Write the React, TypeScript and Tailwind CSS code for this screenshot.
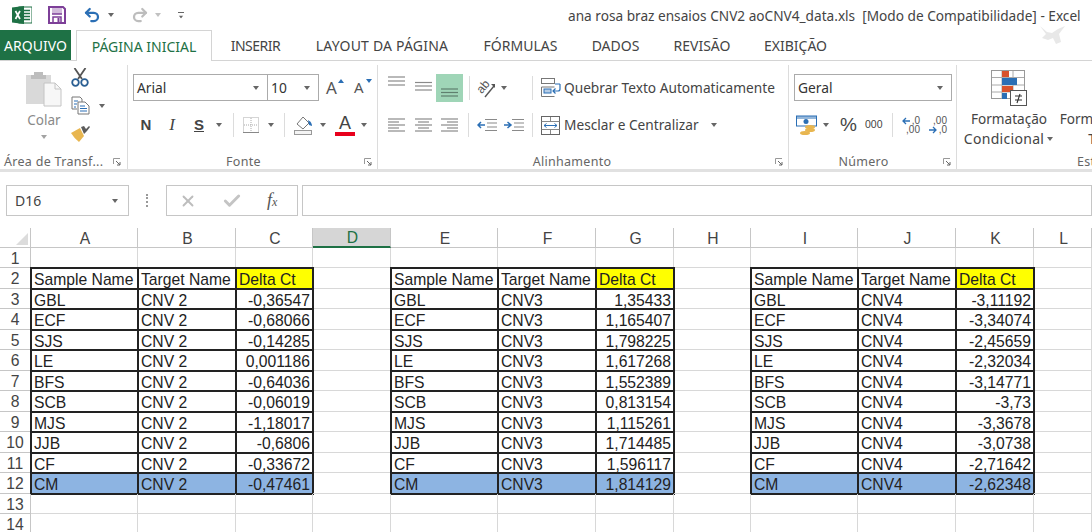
import { Check, Redo2, Undo2, X } from "lucide-react";
import React from "react";

const uiFont = "font-['Noto_Sans',sans-serif]";
const cellFont = "font-['Liberation_Sans',Arial,sans-serif]";

const Caret = ({ className = "" }: { className?: string }) => (
  <svg width="8" height="4" viewBox="0 0 8 4" className={className}>
    <path d="M1 0h6L4 4z" fill="#666" />
  </svg>
);

const Launcher = ({ className = "" }: { className?: string }) => (
  <svg width="8" height="8" viewBox="0 0 8 8" className={className}>
    <path d="M.5 6V.5H7" fill="none" stroke="#999" />
    <path d="M3 3l4 4M7 4v3H4" fill="none" stroke="#666" />
  </svg>
);

const Sep = ({ className = "" }: { className?: string }) => (
  <div className={`w-px h-6 bg-[#dcdcdc] shrink-0 ${className}`} />
);

const ExcelIcon = () => (
  <svg width="20" height="18" viewBox="0 0 20 18">
    <rect x="7" y="1" width="13" height="16" fill="#fff" stroke="#1e7145" />
    <path d="M12 4.500h6M12 7.500h6M12 10.500h6M12 13.500h6" stroke="#1e7145" strokeWidth="1.600" />
    <path d="M0 1.500 12 0v18L0 16.500z" fill="#1e7145" />
    <path d="M3.500 5l4.500 8M8 5l-4.500 8" stroke="#fff" strokeWidth="1.700" />
  </svg>
);

const SaveIcon = () => (
  <svg width="18" height="18" viewBox="0 0 18 18">
    <path d="M1 1h14l2 2v14H1z" fill="none" stroke="#7d3f98" strokeWidth="2" />
    <rect x="4" y="2" width="10" height="6" fill="#7d3f98" opacity=".35" />
    <path d="M4 8h10" stroke="#7d3f98" strokeWidth="1.500" />
    <path d="M5 17v-6h8v6" fill="none" stroke="#7d3f98" strokeWidth="1.500" />
    <rect x="9.500" y="12" width="2" height="4" fill="#7d3f98" />
  </svg>
);

const PasteIcon = () => (
  <svg width="36" height="37" viewBox="0 0 36 37">
    <rect x="0" y="5" width="25" height="29" fill="#d9d9d9" />
    <path d="M8 5V2h9v3h3v4H5V5z" fill="#bdbdbd" />
    <path d="M18 13h11l6 6v17H18z" fill="#f7f7f7" stroke="#c4c4c4" />
    <path d="M29 13v6h6" fill="none" stroke="#c4c4c4" />
  </svg>
);

const ScissorsIcon = () => (
  <svg width="18" height="19" viewBox="0 0 18 19">
    <path d="M3.500 0l7.500 11M14.500 0 7 11" stroke="#555" strokeWidth="1.800" fill="none" />
    <circle cx="4.500" cy="14.500" r="3.300" fill="none" stroke="#2b5f93" strokeWidth="1.800" />
    <circle cx="13.500" cy="14.500" r="3.300" fill="none" stroke="#2b5f93" strokeWidth="1.800" />
  </svg>
);

const CopyIcon = () => (
  <svg width="20" height="19" viewBox="0 0 20 19">
    <path d="M1 1h8l2 2v4M1 1v12h5" fill="none" stroke="#777" />
    <path d="M7 6h7l4 4v8H7z" fill="#fff" stroke="#777" />
    <path d="M3 5h4M3 8h3M3 11h2" stroke="#2b6fb5" />
    <path d="M9 10h5M9 12.500h7M9 15h7" stroke="#2b6fb5" />
  </svg>
);

const BrushIcon = () => (
  <svg width="20" height="17" viewBox="0 0 20 17">
    <path d="M0 8 9 3l4 8-5 6q-5-4-8-9z" fill="#e8b650" />
    <path d="M10 2l3-1 2 3 3-3 1 1-3 4-3 3z" fill="#5c5c5c" />
  </svg>
);

const BorderIcon = () => (
  <svg width="16" height="16" viewBox="0 0 16 16">
    <rect x=".5" y=".5" width="15" height="15" fill="none" stroke="#aaa" strokeDasharray="1 1" />
    <path d="M8 1v14M1 8h14" stroke="#aaa" strokeDasharray="1 1" />
    <path d="M0 15.500h16" stroke="#888" />
  </svg>
);

const FillIcon = () => (
  <svg width="19" height="20" viewBox="0 0 19 20">
    <path d="M3 9l6-7 6 6-6 6z" fill="#fff" stroke="#777" />
    <path d="M14 5q4 2 4 6l-3-1z" fill="#2b6fb5" />
    <rect x=".5" y="15.500" width="17" height="4" fill="#f4f4f4" stroke="#999" />
  </svg>
);

const Lines = ({ ys, dark = false }: { ys: number[]; dark?: boolean }) => (
  <svg width="17" height="27" viewBox="0 0 17 27" className="shrink-0">
    {ys.map((y, i) => (
      <path key={i} d={`M0 ${y}H17`} stroke={dark ? "#5f7f6e" : "#8a8a8a"} strokeWidth="1.200" />
    ))}
  </svg>
);

const AlignLines = ({ rows }: { rows: number[][] }) => (
  <svg width="17" height="14" viewBox="0 0 17 14" className="shrink-0">
    {rows.map((r, i) => (
      <path key={i} d={`M${r[0]} ${i * 3 + 1}H${r[1]}`} stroke="#8a8a8a" strokeWidth="1.200" />
    ))}
  </svg>
);

const OrientIcon = () => (
  <svg width="20" height="20" viewBox="0 0 20 20" className="overflow-visible">
    <text x="0" y="12" fontSize="12" fill="#555" transform="rotate(-50 7 9)" fontFamily="Liberation Sans">ab</text>
    <path d="M8 19 17 8" stroke="#555" strokeWidth="1.400" />
    <path d="M14 6h4v4z" fill="#555" />
  </svg>
);

const IndentIcon = ({ flip = false }: { flip?: boolean }) => (
  <svg width="20" height="14" viewBox="0 0 20 14">
    <path d="M8 1.500h12M10 5h10M10 9h10M8 12.500h12" stroke="#8a8a8a" strokeWidth="1.200" />
    {flip ? <path d="M0 7h6M3.500 4 7 7l-3.500 3" fill="none" stroke="#2b6fb5" strokeWidth="1.500" /> : <path d="M8 7H1M4 4 1 7l3 3" fill="none" stroke="#2b6fb5" strokeWidth="1.500" />}
  </svg>
);

const WrapIcon = () => (
  <svg width="20" height="19" viewBox="0 0 20 19">
    <rect x=".5" y=".5" width="13" height="5" fill="#fff" stroke="#777" />
    <path d="M.5 9h13M.5 18.500h13M.5 9v9.500" fill="none" stroke="#777" />
    <rect x="3" y="11" width="7" height="4" fill="#b6cde6" stroke="#2b6fb5" />
    <path d="M14 6h5M19 6v5q0 2-2 2h-5M14.500 10.500 12 13l2.500 2.500" fill="none" stroke="#2b6fb5" strokeWidth="1.200" />
  </svg>
);

const MergeIcon = () => (
  <svg width="19" height="19" viewBox="0 0 19 19">
    <rect x=".5" y=".5" width="18" height="18" fill="#fff" stroke="#666" />
    <path d="M.5 5.500h18M.5 13.500h18M9.500 1v4.500M9.500 13.500V18" stroke="#888" />
    <path d="M3 9.500h13M5.500 7.500l-2.500 2 2.500 2M13.500 7.500l2.500 2-2.500 2" fill="none" stroke="#2b6fb5" />
  </svg>
);

const AccountIcon = () => (
  <svg width="21" height="21" viewBox="0 0 21 21">
    <rect x=".5" y="1" width="20" height="10" fill="#fff" stroke="#2b6fb5" />
    <path d="M.5 1h20v3H.5z" fill="#2b6fb5" opacity=".5" />
    <circle cx="10" cy="6.500" r="2.500" fill="#2b6fb5" />
    <ellipse cx="14" cy="12" rx="5" ry="2" fill="#e8b650" />
    <ellipse cx="14" cy="15" rx="5" ry="2" fill="#e8b650" />
    <ellipse cx="9" cy="18" rx="5" ry="2" fill="#e8b650" />
  </svg>
);

const CondFormatIcon = () => (
  <svg width="36" height="36" viewBox="0 0 36 36">
    <rect x=".5" y=".5" width="33" height="28" fill="#fff" stroke="#999" />
    <path d="M11 1v28M22 1v28M1 7.500h32M1 15h32M1 22h32" stroke="#aaa" />
    <rect x="11" y="1" width="7" height="6" fill="#d9532c" />
    <rect x="11" y="8" width="15" height="7" fill="#2b6fb5" />
    <rect x="11" y="16" width="11" height="6" fill="#d9532c" />
    <rect x="11" y="23" width="5" height="6" fill="#2b6fb5" />
    <rect x="19.500" y="20.500" width="16" height="15" fill="#fff" stroke="#555" />
    <path d="M24 26h7M24 30h7M26 33l3-9" stroke="#333" strokeWidth="1.100" />
  </svg>
);

const DecimalIcon = ({ more = false }: { more?: boolean }) => (
  <div className={`relative w-[18px] h-[17px] shrink-0 text-[10px] leading-[8px] text-[#555] ${cellFont}`}>
    <span className="block text-right">{more ? ",0" : ",00"}</span>
    <span className="block text-right mt-px">{more ? ",00" : ",0"}</span>
    <svg width="8" height="8" viewBox="0 0 8 8" className={`absolute left-0 ${more ? "top-0" : "top-[9px]"}`}>
      <path d={more ? "M8 4H1M4 1 1 4l3 3" : "M0 4h7M4 1l3 3-3 3"} fill="none" stroke="#2b6fb5" strokeWidth="1.300" />
    </svg>
  </div>
);

const Group = ({ width, label, labelClass = "justify-center", launcher, children }: { width: string; label: string; labelClass?: string; launcher?: React.ReactNode; children: React.ReactNode }) => (
  <section className={`${width} h-full shrink-0 flex flex-col overflow-hidden relative`}>
    <div className="flex-1 min-h-0">{children}</div>
    <div className={`h-[14px] flex items-center text-[12.500px] tracking-[0.3px] text-[#666] ${labelClass}`}>
      <span>{label}</span>
      {launcher}
    </div>
  </section>
);

const VRule = () => <div className="w-px h-[104px] mt-[4px] bg-[#dcdcdc] shrink-0" />;

const TitleBar = () => (
  <div className="h-[30px] flex items-center relative">
    <div className="ml-[12px]"><ExcelIcon /></div>
    <div className="ml-[16px]"><SaveIcon /></div>
    <Undo2 size={18} strokeWidth={3} className="ml-[17px] text-[#2b6fb5]" />
    <Caret className="ml-[6px]" />
    <Redo2 size={18} strokeWidth={3} className="ml-[16px] text-[#bdbdbd]" />
    <Caret className="ml-[5px] opacity-40" />
    <div className="ml-[15px] flex flex-col items-center gap-[2px]">
      <div className="w-[6px] h-px bg-[#666]" />
      <Caret className="scale-75" />
    </div>
    <div className="absolute left-[568px] top-[7px] text-[13.650px] leading-[18px] text-[#444] whitespace-nowrap">
      ana rosa braz ensaios CNV2 aoCNV4_data.xls&nbsp; [Modo de Compatibilidade] - Excel
    </div>
    <svg width="28" height="22" viewBox="0 0 28 22" className="absolute left-[1039px] top-[24px]">
      <path d="M1 2l7 6 5 1 6-4 7-3-6 8 2 8-5 2-3-6-5 2-6-2 4-4z" fill="#e8e8e8" />
    </svg>
  </div>
);

const tabs = [
  { name: "INSERIR", cls: "w-[49px] tracking-[-0.5px]" },
  { name: "LAYOUT DA PÁGINA", cls: "w-[132px] ml-px tracking-[0.2px]" },
  { name: "FÓRMULAS", cls: "w-[73px] ml-px" },
  { name: "DADOS", cls: "w-[47px]" },
  { name: "REVISÃO", cls: "w-[56px]" },
  { name: "EXIBIÇÃO", cls: "w-[61px]" },
];

const Tabs = () => (
  <div className="h-[31px] flex items-stretch text-[14px] border-b border-[#d4d4d4]">
    <div className="w-[71px] h-[30px] bg-[#1e7145] text-white flex items-center justify-center">ARQUIVO</div>
    <div className="ml-[5px] w-[136px] h-[31px] bg-white border border-b-0 border-[#d4d4d4] text-[#1e7145] flex items-center justify-center">PÁGINA INICIAL</div>
    <div className="ml-[19px] flex items-center gap-[35px] text-[#444] h-[30px] whitespace-nowrap">
      {tabs.map((t) => (
        <span key={t.name} className={`${t.cls} flex justify-center`}>{t.name}</span>
      ))}
    </div>
  </div>
);

const SelectBox = ({ width, text, borderLeft = true }: { width: string; text: string; borderLeft?: boolean }) => (
  <div className={`${width} h-[27px] bg-white border border-[#ababab] ${borderLeft ? "" : "border-l-0"} flex items-center justify-between pl-[3px] pr-[7px] text-[13.800px] text-[#333]`}>
    <span className="pt-[2px]">{text}</span>
    <Caret />
  </div>
);

const Clipboard = () => (
  <Group width="w-[127px]" label="Área de Transf..." labelClass="pl-[4px]" launcher={<Launcher className="ml-[10px]" />}>
    <div className="flex h-full">
      <div className="ml-[26px] mt-[9px] flex flex-col items-center w-[36px]">
        <PasteIcon />
        <span className="mt-[3px] text-[13.500px] leading-[20px] text-[#8a8a8a]">Colar</span>
        <Caret className="mt-[5px] opacity-60" />
      </div>
      <div className="ml-[9px] mt-[7px] flex flex-col">
        <ScissorsIcon />
        <div className="mt-[9px] flex items-center">
          <CopyIcon />
          <Caret className="ml-[7px]" />
        </div>
        <div className="mt-[10px]"><BrushIcon /></div>
      </div>
    </div>
  </Group>
);

const FontGroup = () => (
  <Group width="w-[249px]" label="Fonte" labelClass="justify-center pr-[18px]" launcher={<Launcher className="absolute right-[5px]" />}>
    <div className="mt-[13px] ml-[5px] flex items-center">
      <SelectBox width="w-[135px]" text="Arial" />
      <SelectBox width="w-[51px]" text="10" borderLeft={false} />
      <span className="ml-[7px] w-[19px] text-[17px] leading-[27px] text-[#555] relative">
        A
        <svg width="6" height="4" viewBox="0 0 6 4" className="absolute right-[1px] top-[5px]"><path d="M3 0l3 4H0z" fill="#2b6fb5" /></svg>
      </span>
      <span className="ml-[9px] w-[19px] text-[15px] leading-[27px] text-[#555] relative">
        A
        <svg width="6" height="4" viewBox="0 0 6 4" className="absolute right-[1px] top-[5px]"><path d="M0 0h6L3 4z" fill="#2b6fb5" /></svg>
      </span>
    </div>
    <div className="mt-[12px] flex items-center h-6 text-[#444]">
      <span className={`ml-[6px] w-[24px] text-center font-bold text-[15px] ${cellFont}`}>N</span>
      <span className="ml-px w-[26px] text-center italic text-[17px] font-['Liberation_Serif',serif]">I</span>
      <span className={`ml-px w-[26px] text-center font-bold underline text-[15px] ${cellFont}`}>S</span>
      <Caret className="ml-[3px] mr-[3px]" />
      <Sep className="ml-[7px]" />
      <div className="ml-[9px]"><BorderIcon /></div>
      <Caret className="ml-[8px]" />
      <Sep className="ml-[9px]" />
      <div className="ml-[9px]"><FillIcon /></div>
      <Caret className="ml-[6px]" />
      <div className={`ml-[8px] w-[20px] flex flex-col items-center text-[18px] leading-[17px] text-[#444] ${cellFont}`}>
        A
        <div className="w-[20px] h-[4px] bg-[#e8001c]" />
      </div>
      <Caret className="ml-[5px]" />
    </div>
  </Group>
);

const AlignGroup = () => (
  <Group width="w-[410px]" label="Alinhamento" labelClass="justify-center pr-[22px]" launcher={<Launcher className="absolute right-[5px]" />}>
    <div className="mt-[13px] flex items-center h-[27px]">
      <div className="ml-[10px]"><Lines ys={[3, 7, 11]} /></div>
      <div className="ml-[10px]"><Lines ys={[8.500, 12, 16]} /></div>
      <div className="ml-[4px] w-[27px] h-[28px] bg-[#9fd5b7] flex justify-center">
        <Lines ys={[15, 18.500, 22]} dark />
      </div>
      <Sep className="ml-[6px]" />
      <div className="ml-[7px]"><OrientIcon /></div>
      <Caret className="ml-[3px]" />
      <Sep className="ml-[24px]" />
      <div className="ml-[8px]"><WrapIcon /></div>
      <span className="ml-[3px] pt-[2px] text-[13.700px] text-[#444] whitespace-nowrap">Quebrar Texto Automaticamente</span>
    </div>
    <div className="mt-[12px] flex items-center h-6">
      <div className="ml-[10px]"><AlignLines rows={[[0, 17], [0, 11], [0, 17], [0, 11], [0, 17]]} /></div>
      <div className="ml-[10px]"><AlignLines rows={[[0, 17], [3, 14], [0, 17], [3, 14], [0, 17]]} /></div>
      <div className="ml-[9px]"><AlignLines rows={[[0, 17], [6, 17], [0, 17], [6, 17], [0, 17]]} /></div>
      <Sep className="ml-[10px]" />
      <div className="ml-[8px]"><IndentIcon /></div>
      <div className="ml-[7px]"><IndentIcon flip /></div>
      <Sep className="ml-[8px]" />
      <div className="ml-[8px]"><MergeIcon /></div>
      <span className="ml-[4px] text-[13.700px] text-[#444] whitespace-nowrap">Mesclar e Centralizar</span>
      <Caret className="ml-[11px]" />
    </div>
  </Group>
);

const NumberGroup = () => (
  <Group width="w-[167px]" label="Número" labelClass="justify-center pr-[18px]" launcher={<Launcher className="absolute right-[5px]" />}>
    <div className="mt-[13px] ml-[5px]"><SelectBox width="w-[158px]" text="Geral" /></div>
    <div className="mt-[12px] flex items-center h-6 text-[#444]">
      <div className="ml-[7px]"><AccountIcon /></div>
      <Caret className="ml-[5px]" />
      <span className={`ml-[10px] w-[16px] text-[19px] leading-6 ${cellFont}`}>%</span>
      <span className={`ml-[9px] w-[18px] text-[10.500px] ${cellFont}`}>000</span>
      <Sep className="ml-[9px]" />
      <div className="ml-[9px]"><DecimalIcon more /></div>
      <div className="ml-[9px]"><DecimalIcon /></div>
    </div>
  </Group>
);

const StyleGroup = () => (
  <Group width="flex-1" label="Estilo" labelClass="pl-[120px]">
    <div className="flex text-[13.600px] leading-[20px] text-[#444] whitespace-nowrap text-center">
      <div className="ml-[2px] w-[100px] shrink-0 flex flex-col items-center mt-[9px]">
        <CondFormatIcon />
        <span className="mt-[3px]">Formatação</span>
        <span className="flex items-center gap-[2px] text-[14px] tracking-[0.3px]">Condicional <Caret /></span>
      </div>
      <div className="w-[100px] shrink-0 flex flex-col items-center mt-[48px]">
        <span>Formatar como</span>
        <span>Tabela</span>
      </div>
    </div>
  </Group>
);

const Ribbon = () => (
  <div className={`h-[111px] flex border-b-[3px] border-[#e1e1e1] ${uiFont} overflow-hidden`}>
    <Clipboard />
    <VRule />
    <FontGroup />
    <VRule />
    <AlignGroup />
    <VRule />
    <NumberGroup />
    <VRule />
    <StyleGroup />
  </div>
);

const FormulaBar = () => (
  <div className={`h-[56px] pt-[13px] flex items-start ${uiFont}`}>
    <div className="ml-[6px] w-[123px] h-[31px] border border-[#c6c6c6] flex items-center justify-between pl-[8px] pr-[9px] text-[14px] text-[#444]">
      <span>D16</span>
      <Caret />
    </div>
    <div className="ml-[17px] w-[2px] h-[13px] mt-[9px] border-l-2 border-dotted border-[#999]" />
    <div className="ml-[18px] w-[132px] h-[31px] border border-[#c6c6c6] flex items-center">
      <X size={18} strokeWidth={2.500} className="ml-[12px] text-[#bdbdbd]" />
      <Check size={20} strokeWidth={3.500} className="ml-[25px] text-[#c4c4c4]" />
      <span className="ml-[25px] italic text-[18px] text-[#555] font-['Liberation_Serif',serif]">
        f<span className="text-[12px]">x</span>
      </span>
    </div>
    <div className="ml-[4px] flex-1 h-[31px] border border-[#c6c6c6]" />
  </div>
);

const columns = ["A", "B", "C", "D", "E", "F", "G", "H", "I", "J", "K", "L"];

const tables: Record<number, { target: string; values: string[] }> = {
  1: { target: "CNV 2", values: ["-0,36547", "-0,68066", "-0,14285", "0,001186", "-0,64036", "-0,06019", "-1,18017", "-0,6806", "-0,33672", "-0,47461"] },
  5: { target: "CNV3", values: ["1,35433", "1,165407", "1,798225", "1,617268", "1,552389", "0,813154", "1,115261", "1,714485", "1,596117", "1,814129"] },
  9: { target: "CNV4", values: ["-3,11192", "-3,34074", "-2,45659", "-2,32034", "-3,14771", "-3,73", "-3,3678", "-3,0738", "-2,71642", "-2,62348"] },
};

const samples = ["GBL", "ECF", "SJS", "LE", "BFS", "SCB", "MJS", "JJB", "CF", "CM"];

const Cell = ({ row, col }: { row: number; col: number }) => {
  const base = col >= 9 ? 9 : col >= 5 ? 5 : 1;
  const offset = col - base;
  const inTable = offset <= 2 && row >= 2 && row <= 12;
  if (!inTable) return <div className="border-r border-b border-[#d8d8d8]" />;

  const t = tables[base];
  let text = "";
  if (row === 2) text = ["Sample Name", "Target Name", "Delta Ct"][offset];
  else text = offset === 0 ? samples[row - 3] : offset === 1 ? t.target : t.values[row - 3];

  const numeric = offset === 2 && row > 2;
  const bg = row === 12 ? "bg-[#8db4e2]" : row === 2 && offset === 2 ? "bg-[#ffff00]" : "bg-white";
  return (
    <div className={`${bg} outline-2 -outline-offset-1 outline-[#222] flex items-center whitespace-nowrap px-[3px] pt-[2px] leading-[19px] ${numeric ? "justify-end" : ""}`}>
      {text}
    </div>
  );
};

const Sheet = () => {
  const rows = Array.from({ length: 14 }, (_, i) => i + 1);
  return (
    <div className={`grid grid-cols-[31px_107px_98px_77px_78px_107px_98px_78px_77px_107px_98px_78px_58px] grid-rows-[20px_20px_21px_20px_21px_20px_21px_20px_21px_20px_21px_20px_21px_20px_21px] text-[15.700px] text-[#222] ${cellFont}`}>
      <div className="bg-white border-r border-b border-[#c6c6c6] flex items-end justify-end p-[2px]">
        <svg width="12" height="12" viewBox="0 0 12 12"><path d="M12 0v12H0z" fill="#dcdcdc" /></svg>
      </div>
      {columns.map((c) => (
        <div key={c} className={c === "D" ? "bg-[#d6d6d6] border-r border-b-2 border-[#1e7145] border-r-[#c6c6c6] text-[#1e7145] flex items-center justify-center pl-[2px] pt-[2px]" : "bg-white border-r border-b border-[#c6c6c6] text-[#444] flex items-center justify-center pl-[2px] pt-[2px]"}>
          {c}
        </div>
      ))}
      {rows.map((r) => (
        <React.Fragment key={r}>
          <div className="bg-white border-r border-b border-[#c6c6c6] text-[#444] flex items-center justify-center pt-[2px]">{r}</div>
          {Array.from({ length: 12 }, (_, c) => (
            <Cell key={c} row={r} col={c + 1} />
          ))}
        </React.Fragment>
      ))}
    </div>
  );
};

export default function App() {
  return (
    <div className={`w-[1092px] h-[532px] overflow-hidden bg-white ${uiFont}`}>
      <TitleBar />
      <Tabs />
      <Ribbon />
      <FormulaBar />
      <Sheet />
    </div>
  );
}
